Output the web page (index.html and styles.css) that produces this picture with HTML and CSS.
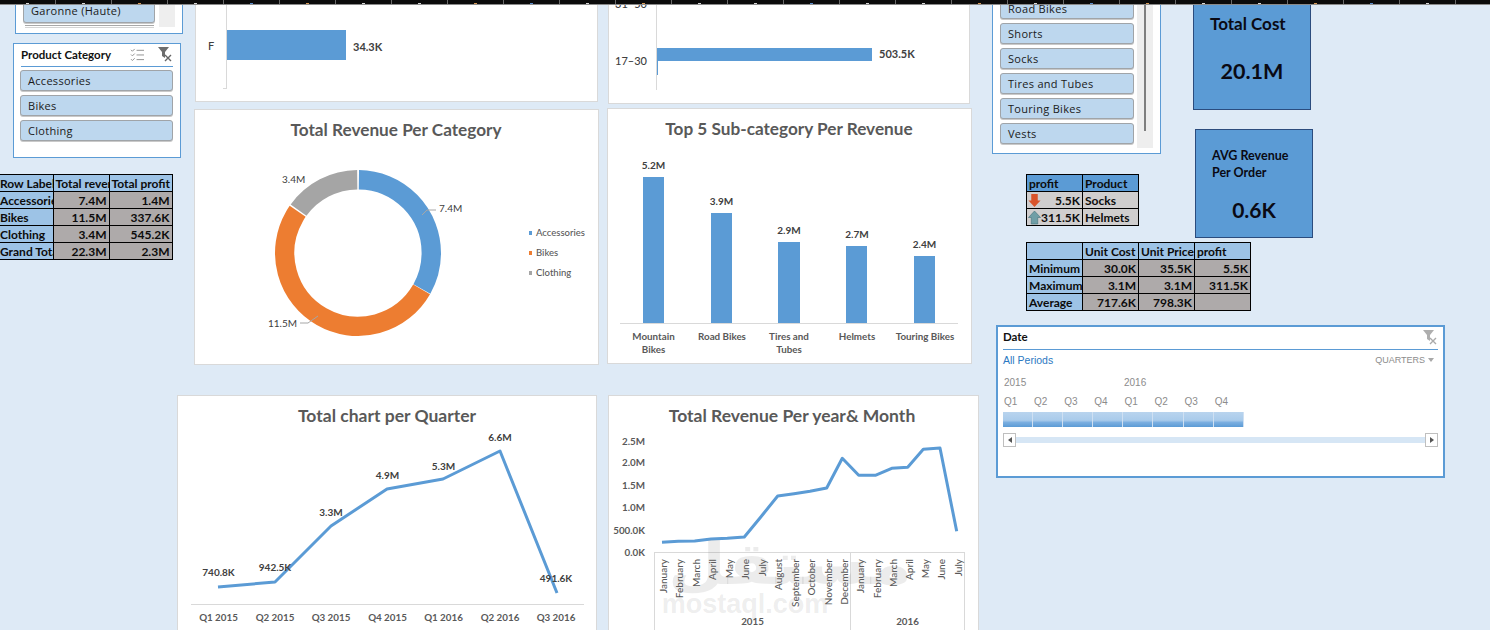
FILE: index.html
```html
<!DOCTYPE html>
<html lang="en">
<head>
<meta charset="utf-8">
<title>Sales Dashboard</title>
<link rel="stylesheet" href="styles.css">
</head>
<body>
<main class="sheet">
  <div class="topbar">
    <i></i><i></i><i></i><i></i><i></i><i></i><i></i><i></i><i></i><i></i><i></i><i></i><i></i>
    <i></i><i></i><i></i><i></i><i></i><i></i><i></i><i></i><i></i><i></i><i></i><i></i><i></i>
  </div>

  <section class="slicer slicer-region">
    <div class="slicer-list"><div class="chip chip-region">Garonne (Haute)</div><div class="rule"></div></div>
    <div class="track"></div>
  </section>

  <section class="slicer slicer-category">
    <header class="slicer-head">
      <h3>Product Category</h3>
      <svg class="ico-multi" viewBox="0 0 16 14"><path d="M1 2l1.5 1.5L5 1M1 7l1.5 1.5L5 6M1 12l1.5 1.5L5 11" /><path d="M7 2.500h8M7 7.500h8M7 12.500h8"/></svg>
      <svg class="ico-clear" viewBox="0 0 16 16"><path class="f" d="M1 1h11L8 6v6L5 10V6z"/><path class="x" d="M8 9l6 6M14 9l-6 6"/></svg>
    </header>
    <div class="chips">
      <div class="chip">Accessories</div>
      <div class="chip">Bikes</div>
      <div class="chip">Clothing</div>
    </div>
  </section>

  <table class="xl xl-category">
    <tr class="hd"><th class="c-a">Row Labels</th><th class="c-b">Total revenue</th><th class="c-c">Total profit</th></tr>
    <tr><th>Accessories</th><td>7.4M</td><td>1.4M</td></tr>
    <tr><th>Bikes</th><td>11.5M</td><td>337.6K</td></tr>
    <tr><th>Clothing</th><td>3.4M</td><td>545.2K</td></tr>
    <tr><th>Grand Total</th><td>22.3M</td><td>2.3M</td></tr>
  </table>

  <section class="panel p-gender">
    <svg viewBox="196 -9 401 110">
      <path class="axis" d="M226.500 0V88M223 88.500h4"/>
      <rect class="bar" x="227" y="30" width="119" height="30"/>
      <text class="lbl-cat" x="208" y="50">F</text>
      <text class="lbl" x="353" y="51">34.3K</text>
    </svg>
  </section>

  <section class="panel p-age">
    <svg viewBox="609 -9 360 112">
      <path class="axis" d="M656.500 0V90"/>
      <rect class="bar" x="657" y="48" width="215" height="13"/>
      <rect class="bar" x="657" y="61" width="1" height="14"/>
      <text class="lbl-cat" x="615" y="8">31–50</text>
      <text class="lbl-cat" x="615" y="65">17–30</text>
      <text class="lbl" x="879" y="58">503.5K</text>
    </svg>
  </section>

  <section class="panel p-donut">
    <svg viewBox="195 110 403 254">
      <text class="title title-tight" x="396" y="136">Total Revenue Per Category</text>
      <circle class="seg s-blue" cx="358" cy="253" r="73.300" pathLength="360" stroke-dasharray="118.700 241.300" transform="rotate(-89.300 358 253)"/>
      <circle class="seg s-orange" cx="358" cy="253" r="73.300" pathLength="360" stroke-dasharray="184.900 175.100" transform="rotate(29.800 358 253)"/>
      <circle class="seg s-gray" cx="358" cy="253" r="73.300" pathLength="360" stroke-dasharray="53.600 306.400" transform="rotate(215.800 358 253)"/>
      <path class="leader" d="M422 215l5-5h9M318 316l-10 7h-8"/>
      <text class="lbl-sm" x="439" y="212">7.4M</text>
      <text class="lbl-sm" x="282" y="183">3.4M</text>
      <text class="lbl-sm" x="268" y="327">11.5M</text>
      <rect class="k-blue" x="529" y="231" width="3" height="4"/>
      <rect class="k-orange" x="529" y="251" width="3" height="4"/>
      <rect class="k-gray" x="529" y="271" width="3" height="4"/>
      <text class="legend" x="536" y="236">Accessories</text>
      <text class="legend" x="536" y="256">Bikes</text>
      <text class="legend" x="536" y="276">Clothing</text>
    </svg>
  </section>

  <section class="panel p-top5">
    <svg viewBox="608 109 363 254">
      <text class="title title-tight" x="789" y="135">Top 5 Sub-category Per Revenue</text>
      <rect class="bar" x="643" y="177" width="21" height="146"/>
      <rect class="bar" x="711" y="213" width="21" height="110"/>
      <rect class="bar" x="778" y="242" width="22" height="81"/>
      <rect class="bar" x="846" y="246" width="21" height="77"/>
      <rect class="bar" x="914" y="256" width="21" height="67"/>
      <path class="axis" d="M620 323.500h338"/>
      <text class="val" x="653.500" y="169">5.2M</text>
      <text class="val" x="721.500" y="205">3.9M</text>
      <text class="val" x="789" y="234">2.9M</text>
      <text class="val" x="857" y="238">2.7M</text>
      <text class="val" x="924.500" y="248">2.4M</text>
      <text class="tick" x="653.500" y="340">Mountain</text>
      <text class="tick" x="653.500" y="353">Bikes</text>
      <text class="tick" x="722" y="340">Road Bikes</text>
      <text class="tick" x="789" y="340">Tires and</text>
      <text class="tick" x="789" y="353">Tubes</text>
      <text class="tick" x="857" y="340">Helmets</text>
      <text class="tick" x="925" y="340">Touring Bikes</text>
    </svg>
  </section>

  <section class="slicer slicer-sub">
    <div class="chips chips-sub">
      <div class="chip">Road Bikes</div>
      <div class="chip">Shorts</div>
      <div class="chip">Socks</div>
      <div class="chip">Tires and Tubes</div>
      <div class="chip">Touring Bikes</div>
      <div class="chip">Vests</div>
    </div>
    <div class="track track-sub"><span class="thumb"></span></div>
  </section>

  <section class="kpi kpi-cost">
    <h2>Total Cost</h2>
    <strong>20.1M</strong>
  </section>
  <section class="kpi kpi-avg">
    <h2>AVG Revenue<br>Per Order</h2>
    <strong>0.6K</strong>
  </section>

  <table class="xl xl-profit">
    <tr class="hd-dark"><th>profit</th><th>Product</th></tr>
    <tr><td class="arrowcell"><svg viewBox="0 0 14 16"><path class="down" d="M3.500 1h7v7h3L7 15 0.500 8h3z"/></svg><span>5.5K</span></td><td class="name">Socks</td></tr>
    <tr><td class="arrowcell"><svg viewBox="0 0 14 16"><path class="up" d="M7 1l6.500 7h-3v7h-7V8h-3z"/></svg><span>311.5K</span></td><td class="name">Helmets</td></tr>
  </table>

  <table class="xl xl-stats">
    <tr class="hd"><th></th><th>Unit Cost</th><th>Unit Price</th><th>profit</th></tr>
    <tr><th>Minimum</th><td>30.0K</td><td>35.5K</td><td>5.5K</td></tr>
    <tr><th>Maximum</th><td>3.1M</td><td>3.1M</td><td>311.5K</td></tr>
    <tr><th>Average</th><td>717.6K</td><td>798.3K</td><td></td></tr>
  </table>

  <section class="timeline">
    <header class="tl-head">
      <h3>Date</h3>
      <svg class="ico-clear faded" viewBox="0 0 16 16"><path class="f" d="M1 1h11L8 6v6L5 10V6z"/><path class="x" d="M8 9l6 6M14 9l-6 6"/></svg>
    </header>
    <div class="tl-row">
      <span class="tl-all">All Periods</span>
      <span class="tl-level">QUARTERS<b></b></span>
    </div>
    <div class="tl-years"><span>2015</span><span>2016</span></div>
    <div class="tl-grid tl-q">
      <span>Q1</span><span>Q2</span><span>Q3</span><span>Q4</span><span>Q1</span><span>Q2</span><span>Q3</span><span>Q4</span>
    </div>
    <div class="tl-grid tl-bars">
      <i></i><i></i><i></i><i></i><i></i><i></i><i></i><i></i>
    </div>
    <div class="tl-scroll">
      <span class="tl-btn"><b class="left"></b></span>
      <span class="tl-track"></span>
      <span class="tl-btn"><b class="right"></b></span>
    </div>
  </section>

  <section class="panel p-quarter">
    <svg viewBox="178 396 418 243">
      <text class="title" x="387" y="422">Total chart per Quarter</text>
      <path class="axis" d="M191 604.500h393"/>
      <polyline class="line" points="218,587 275,582 331,526 387,489 443,479 500,451 557,593"/>
      <text class="val" x="218.500" y="576">740.8K</text>
      <text class="val" x="275" y="571">942.5K</text>
      <text class="val" x="331" y="516">3.3M</text>
      <text class="val" x="387.500" y="479">4.9M</text>
      <text class="val" x="443.500" y="470">5.3M</text>
      <text class="val" x="500" y="441">6.6M</text>
      <text class="val" x="556" y="582">491.6K</text>
      <text class="tick" x="218.500" y="621">Q1 2015</text>
      <text class="tick" x="275" y="621">Q2 2015</text>
      <text class="tick" x="331" y="621">Q3 2015</text>
      <text class="tick" x="387.500" y="621">Q4 2015</text>
      <text class="tick" x="443.500" y="621">Q1 2016</text>
      <text class="tick" x="500" y="621">Q2 2016</text>
      <text class="tick" x="556" y="621">Q3 2016</text>
    </svg>
  </section>

  <section class="panel p-month">
    <svg viewBox="609 396 369 243">
      <text class="title" x="792" y="422">Total Revenue Per year&amp; Month</text>
      <text class="ytick" x="645" y="445">2.5M</text>
      <text class="ytick" x="645" y="466">2.0M</text>
      <text class="ytick" x="645" y="489">1.5M</text>
      <text class="ytick" x="645" y="511">1.0M</text>
      <text class="ytick" x="645" y="534">500.0K</text>
      <text class="ytick" x="645" y="556">0.0K</text>
      <path class="axis" d="M654.500 552.500h310M654.500 552v78M850.500 552v78M964.500 552v78"/>
      <polyline class="line" points="662,542.300 678.300,541.300 694.700,541 711,539 727.300,538.300 744.300,537 761,516.700 777.700,496 794,493.700 810,491.300 826.700,488 842.300,458.300 858.700,475.300 875.300,475.300 891.700,468.300 907.700,467.300 923.300,449.300 940,448 956.700,531.300"/>
      <g class="months">
        <text transform="translate(667 559) rotate(-90)">January</text>
        <text transform="translate(683 559) rotate(-90)">February</text>
        <text transform="translate(700 559) rotate(-90)">March</text>
        <text transform="translate(716 559) rotate(-90)">April</text>
        <text transform="translate(733 559) rotate(-90)">May</text>
        <text transform="translate(749 559) rotate(-90)">June</text>
        <text transform="translate(766 559) rotate(-90)">July</text>
        <text transform="translate(782 559) rotate(-90)">August</text>
        <text transform="translate(799 559) rotate(-90)">September</text>
        <text transform="translate(815 559) rotate(-90)">October</text>
        <text transform="translate(832 559) rotate(-90)">November</text>
        <text transform="translate(848 559) rotate(-90)">December</text>
        <text transform="translate(864 559) rotate(-90)">January</text>
        <text transform="translate(881 559) rotate(-90)">February</text>
        <text transform="translate(897 559) rotate(-90)">March</text>
        <text transform="translate(913 559) rotate(-90)">April</text>
        <text transform="translate(929 559) rotate(-90)">May</text>
        <text transform="translate(945 559) rotate(-90)">June</text>
        <text transform="translate(962 559) rotate(-90)">July</text>
      </g>
      <text class="tick" x="752.500" y="625">2015</text>
      <text class="tick" x="907.500" y="625">2016</text>
    </svg>
  </section>

  <div class="watermark"><span class="wm-ar" dir="rtl">مستقل</span><span class="wm-en">mostaql.com</span></div>
</main>
</body>
</html>
```

FILE: styles.css
```css
* { box-sizing: border-box; }
html, body { margin: 0; padding: 0; }
body { background: #deeaf6; overflow: hidden; }

.sheet {
  position: relative;
  width: 1490px;
  height: 630px;
  overflow: hidden;
  background: #deeaf6;
  font-family: Lato, "Liberation Sans", sans-serif;
}

/* Excel ruler sliver along the top edge */
.topbar {
  position: absolute;
  z-index: 5;
  left: 0; top: 0;
  width: 1490px;
  height: 5px;
  display: flex;
  background: #0b0b0b;
  border-bottom: 1px solid #8a8a8a;
}
.topbar i {
  flex: 0 0 56px;
  height: 4px;
  border-right: 1px solid #6a6a6a;
  position: relative;
}
.topbar i::after {
  content: "";
  position: absolute;
  left: 26px; bottom: 0;
  width: 3px; height: 1px;
  background: #d8d8d8;
}
.topbar i:nth-child(3n)::after { background: #d99a55; }
.topbar i:nth-child(5n)::after { background: #5b8fd0; }

/* Slicers */
.slicer {
  position: absolute;
  background: #fff;
  border: 1px solid #5b9bd5;
  font-family: "Open Sans", "Liberation Sans", sans-serif;
}
.slicer-region {
  left: 15px; top: -10px;
  width: 168px; height: 44px;
  display: flex;
  gap: 4px;
  padding: 0 7px;
}
.slicer-list { width: 133px; }
.rule {
  margin: 2px 1px 0 2px;
  border-top: 1px solid #a8a8a8;
  border-bottom: 1px solid #d5d5d5;
  height: 3px;
}
.track { width: 16px; height: 36px; background: #eeeeee; }

.slicer-category {
  left: 13px; top: 43px;
  width: 168px; height: 115px;
  padding: 0 7px 0 6px;
}
.slicer-head {
  height: 23px;
  margin: 0 0 3px 1px;
  display: flex;
  align-items: center;
  border-bottom: 1px solid #5b9bd5;
  padding-bottom: 2px;
}
.slicer-head h3 {
  margin: 0;
  flex: 1;
  font: 700 11.500px Lato, sans-serif;
  color: #111;
}
.ico-multi { width: 15px; height: 13px; margin-right: 12px; fill: none; stroke: #8c8c8c; stroke-width: 1; }
.ico-clear { width: 16px; height: 16px; }
.ico-clear .f { fill: #6d6d6d; }
.ico-clear .x { fill: none; stroke: #666; stroke-width: 1.400; }
.ico-clear.faded { opacity: .55; }

.chips { display: flex; flex-direction: column; gap: 4px; }
.chip {
  height: 21px;
  display: flex;
  align-items: center;
  padding-left: 7px;
  background: #bdd7ee;
  border: 1px solid #a0a4a8;
  border-radius: 3px;
  font-size: 11px;
  letter-spacing: .3px;
  color: #1a1a1a;
  box-shadow: 0 1px 0 #c9c9c9;
}
.slicer-list .chip-region { height: 32px; align-items: flex-end; padding-bottom: 4px; }
.slicer-sub {
  left: 992px; top: -10px;
  width: 169px; height: 164px;
  display: flex;
  gap: 3px;
  padding: 0 7px;
}
.chips-sub { width: 134px; justify-content: flex-end; padding-bottom: 9px; }
.track-sub { width: 16px; height: 157px; display: flex; justify-content: center; }
.thumb { width: 2px; height: 140px; background: #7f7f7f; }

/* Pivot-like tables */
.xl {
  position: absolute;
  table-layout: fixed;
  border-collapse: collapse;
  font: 700 12px Lato, sans-serif;
  color: #0c0c0c;
}
.xl th, .xl td {
  height: 17px;
  padding: 2px 2px 0 1px;
  border: 1px solid #000;
  overflow: hidden;
  white-space: nowrap;
  line-height: 14px;
}
.xl th { background: #9dc3e6; text-align: left; font-weight: 700; }
.xl td { background: #aeaaaa; text-align: right; }
.xl-category { left: 0; top: 174px; width: 172px; }
.xl-category .c-a { width: 53px; }
.xl-category .c-b { width: 56px; padding-left: 2px; }
.xl-category .c-c { width: 63px; padding-left: 2px; }
.xl-category tr th:first-child { border-left: 0; padding-left: 0; }
.xl-profit { left: 1026px; top: 174px; width: 113px; }
.xl-profit th { background: #5b9bd5; padding-left: 2px; width: 56px; }
.xl-profit td { background: #d0cece; }
.xl-profit .name { text-align: left; padding-left: 2px; }
.arrowcell { position: relative; }
.arrowcell svg { position: absolute; left: 1px; top: 1px; width: 13px; height: 15px; }
.down { fill: #d9542b; }
.up { fill: #6f9ea6; stroke: #3f6c75; stroke-width: .6; }
.xl-stats { left: 1026px; top: 242px; width: 225px; }
.xl-stats th, .xl-stats td { width: 56px; }
.xl-stats th { padding-left: 2px; }

/* Chart panels */
.panel {
  position: absolute;
  background: #fff;
  border: 1px solid #d9d9d9;
}
.panel svg { display: block; width: 100%; height: 100%; }
.p-gender { left: 195px; top: -10px; width: 403px; height: 112px; }
.p-age { left: 608px; top: -10px; width: 362px; height: 114px; }
.p-donut { left: 194px; top: 109px; width: 405px; height: 256px; }
.p-top5 { left: 607px; top: 108px; width: 365px; height: 256px; }
.p-quarter { left: 177px; top: 395px; width: 420px; height: 245px; }
.p-month { left: 608px; top: 395px; width: 371px; height: 245px; }

svg text { font-family: Lato, "Liberation Sans", sans-serif; }
.title { font-size: 17.500px; font-weight: 700; fill: #595959; text-anchor: middle; }
.title-tight { font-size: 17.200px; }
.axis { fill: none; stroke: #d9d9d9; stroke-width: 1; }
.bar { fill: #5b9bd5; }
.lbl { font-size: 11px; font-weight: 700; fill: #404040; }
.lbl-cat { font-size: 11px; font-weight: 500; fill: #404040; }
.lbl-sm { font-size: 10px; fill: #404040; }
.val { font-size: 10px; font-weight: 700; fill: #404040; text-anchor: middle; }
.tick { font-size: 9.800px; font-weight: 700; fill: #595959; text-anchor: middle; }
.ytick { font-size: 9.800px; font-weight: 700; fill: #595959; text-anchor: end; }
.months text { font-size: 10px; font-weight: 500; fill: #595959; text-anchor: end; }
.legend { font-size: 9.500px; font-weight: 500; fill: #595959; }
.seg { fill: none; stroke-width: 19.400; }
.s-blue { stroke: #5b9bd5; }
.s-orange { stroke: #ed7d31; }
.s-gray { stroke: #a5a5a5; }
.k-blue { fill: #5b9bd5; }
.k-orange { fill: #ed7d31; }
.k-gray { fill: #a5a5a5; }
.leader { fill: none; stroke: #a6a6a6; stroke-width: 1; }
.line { fill: none; stroke: #5b9bd5; stroke-width: 3; stroke-linejoin: round; }

/* KPI boxes */
.kpi {
  position: absolute;
  background: #5b9bd5;
  border: 1px solid #2b4c7e;
  color: #0a0a14;
}
.kpi h2 { margin: 0; padding-left: 16px; font-weight: 700; }
.kpi strong { display: block; font-weight: 700; text-align: center; }
.kpi-cost { left: 1193px; top: -10px; width: 118px; height: 120px; padding-top: 23px; }
.kpi-cost h2 { font-size: 17px; line-height: 20px; }
.kpi-cost strong { font-size: 21.500px; line-height: 26px; margin-top: 24px; }
.kpi-avg { left: 1195px; top: 129px; width: 118px; height: 109px; padding-top: 17px; }
.kpi-avg h2 { font-size: 12.500px; line-height: 17px; }
.kpi-avg strong { font-size: 21px; line-height: 26px; margin-top: 16px; }

/* Timeline slicer */
.timeline {
  position: absolute;
  left: 996px; top: 325px;
  width: 449px; height: 153px;
  background: #fff;
  border: 2px solid #5b9bd5;
  padding: 0 5px;
  font: 400 10px "Liberation Sans", sans-serif;
  color: #8c8c8c;
  display: flex;
  flex-direction: column;
}
.tl-head {
  height: 23px;
  display: flex;
  justify-content: space-between;
  align-items: center;
  border-bottom: 1px solid #5b9bd5;
  padding: 0 0 3px 0;
}
.tl-head h3 { margin: 0; font: 700 11.500px Lato, sans-serif; color: #111; }
.tl-row {
  display: flex;
  justify-content: space-between;
  align-items: center;
  height: 21px;
  padding: 0 4px 2px 0;
}
.tl-all { color: #2b79c2; font-size: 10.500px; }
.tl-level { font-size: 9px; display: flex; align-items: center; gap: 3px; }
.tl-level b {
  border: 3px solid transparent;
  border-top: 4px solid #a8a8a8;
  border-bottom: 0;
}
.tl-years { display: flex; height: 19px; padding: 6px 0 0 1px; }
.tl-years span { width: 120px; }
.tl-grid { display: grid; grid-template-columns: repeat(8, 30.100px); width: 241px; }
.tl-q { height: 20px; align-items: center; padding: 2px 0 0 1px; }
.tl-bars { height: 15px; margin-top: 2px; }
.tl-bars i {
  background: linear-gradient(#b9d4ee 0%, #a9cbeb 55%, #7aaee0 70%, #5b9bd5 100%);
  border-right: 1px solid #cfe0f2;
}
.tl-scroll { display: flex; align-items: center; height: 14px; margin-top: 6px; }
.tl-btn {
  flex: 0 0 13px;
  height: 14px;
  border: 1px solid #bfbfbf;
  background: #fff;
  display: flex;
  align-items: center;
  justify-content: center;
}
.tl-btn b { border: 3px solid transparent; }
.tl-btn .left { border-right: 4px solid #555; border-left: 0; }
.tl-btn .right { border-left: 4px solid #555; border-right: 0; }
.tl-track { flex: 1; height: 6px; background: #d6e6f5; }

/* Platform watermark, laid over the chart */
.watermark {
  position: absolute;
  left: 645px; top: 536px;
  width: 200px;
  display: flex;
  flex-direction: column;
  align-items: center;
  color: rgba(130, 130, 130, .15);
  pointer-events: none;
}
.wm-ar { font: 700 58px/56px "DejaVu Sans", sans-serif; transform: translateX(45px) scaleX(1.15); }
.wm-en { font: 700 27px/24px "Liberation Sans", sans-serif; }
```
